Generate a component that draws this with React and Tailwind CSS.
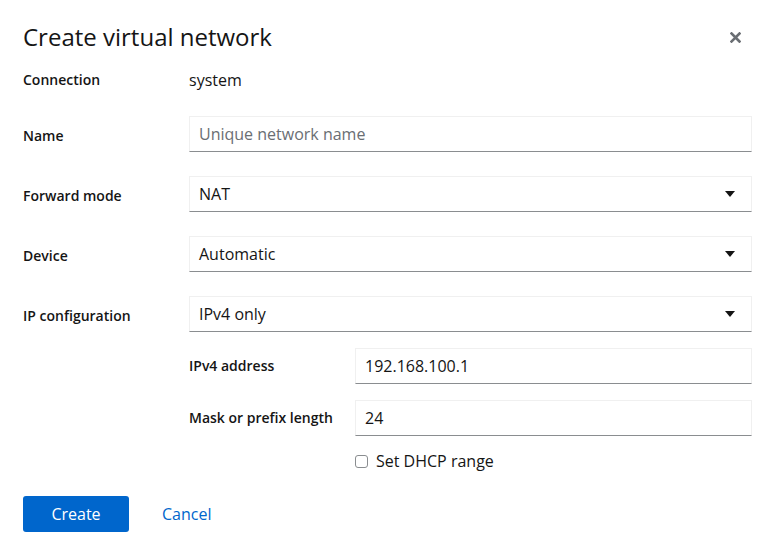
const font = { fontFamily: '"Open Sans", "Liberation Sans", sans-serif' };

function Caret() {
  return (
    <svg width="10" height="6" viewBox="0 0 10 6" className="shrink-0">
      <path d="M0 0h10L5 6z" fill="#151515" />
    </svg>
  );
}

function Field({ children, select }) {
  return (
    <div className="flex-1 h-9 flex items-center justify-between pl-[9px] pr-4 border border-[#f0f0f0] border-b-[#8a8d90] text-base text-[#151515]">
      <span>{children}</span>
      {select && <Caret />}
    </div>
  );
}

function Row({ label, children, sub }) {
  return (
    <div className="flex items-center">
      <div className={`w-[166px] shrink-0 text-sm font-semibold text-[#151515] ${sub ? "" : "pt-[3px]"}`}>{label}</div>
      {children}
    </div>
  );
}

export default function App() {
  return (
    <div className="w-[770px] h-[552px] bg-white pl-[23px] pr-[18px] pt-[22px]" style={font}>
      {/* Header */}
      <div className="flex items-center justify-between">
        <h1 className="text-[24px] leading-[30px] text-[#151515]">Create virtual network</h1>
        <button className="mr-[11px] text-[#6a6e73]">
          <svg width="11" height="11" viewBox="0 0 11 11">
            <path d="M1.5 1.5l8 8M9.5 1.5l-8 8" stroke="#6a6e73" strokeWidth="2.6" strokeLinecap="square" />
          </svg>
        </button>
      </div>

      {/* Body */}
      <div className="mt-[18px] flex items-center h-5">
        <div className="w-[166px] text-sm font-semibold text-[#151515]">Connection</div>
        <div className="text-base text-[#151515]">system</div>
      </div>

      <div className="mt-[26px] flex flex-col gap-6">
        <Row label="Name">
          <div className="flex-1 h-9 flex items-center pl-[9px] border border-[#f0f0f0] border-b-[#8a8d90] text-base text-[#6a6e73]">
            Unique network name
          </div>
        </Row>
        <Row label="Forward mode">
          <Field select>NAT</Field>
        </Row>
        <Row label="Device">
          <Field select>Automatic</Field>
        </Row>
        <Row label="IP configuration">
          <Field select>IPv4 only</Field>
        </Row>
      </div>

      <div className="ml-[166px] mt-4 flex flex-col gap-4">
        <Row label="IPv4 address" sub>
          <Field>192.168.100.1</Field>
        </Row>
        <Row label="Mask or prefix length" sub>
          <Field>24</Field>
        </Row>
        <div className="flex items-center pl-[166px] h-[18px]">
          <span className="w-[13px] h-[13px] rounded-[3px] border border-[#8a8d90] bg-white" />
          <span className="ml-2 text-base text-[#151515]">Set DHCP range</span>
        </div>
      </div>

      {/* Footer */}
      <div className="mt-[26px] flex items-center gap-[33px]">
        <button className="w-[106px] h-9 rounded-[3px] bg-[#0066cc] text-white text-base">Create</button>
        <button className="text-base text-[#0066cc]">Cancel</button>
      </div>
    </div>
  );
}
